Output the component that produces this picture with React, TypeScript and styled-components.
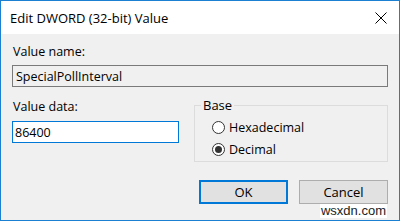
import React from "react";
import styled, { createGlobalStyle } from "styled-components";

const Global = createGlobalStyle`
  html, body { margin: 0; padding: 0; background: #ffffff; }
  * { box-sizing: border-box; }
`;

const Window = styled.div`
  width: 400px;
  height: 221px;
  border: 1px solid #1c80d2;
  display: flex;
  flex-direction: column;
  font-family: "Open Sans", "Noto Sans", sans-serif;
  font-size: 12px;
  color: #000;
  background: #f0f0f0;
  position: relative;
  overflow: hidden;
`;

const TitleBar = styled.div`
  height: 33px;
  background: #ffffff;
  display: flex;
  align-items: center;
  justify-content: space-between;
  padding: 0 12px 0 9px;
  flex-shrink: 0;
`;

const Title = styled.div`
  font-size: 13px;
  color: #000;
`;

const Body = styled.div`
  flex: 1;
  padding: 10px 11px 0 11px;
  display: flex;
  flex-direction: column;
`;

const Label = styled.div<{ $mt?: number }>`
  margin-top: ${(p) => p.$mt ?? 0}px;
  height: 16px;
  line-height: 16px;
  padding-left: 1px;
  font-size: 12.5px;
`;

const ReadOnlyBox = styled.div`
  margin-top: 5px;
  height: 22px;
  border: 1px solid #7a7a7a;
  background: #f0f0f0;
  display: flex;
  align-items: center;
  padding-left: 3px;
  font-size: 12.5px;
`;

const Row = styled.div`
  display: flex;
  gap: 15px;
`;

const LeftCol = styled.div`
  width: 167px;
  display: flex;
  flex-direction: column;
`;

const Input = styled.div`
  margin-top: 6px;
  height: 22px;
  border: 1px solid #0078d7;
  background: #ffffff;
  display: flex;
  align-items: center;
  padding-left: 2px;
  font-size: 12.5px;
`;

const Group = styled.fieldset`
  flex: 1;
  margin: 12px 0 0 0;
  height: 63px;
  border: 1px solid #dcdcdc;
  padding: 8px 0 0 17px;
  display: flex;
  flex-direction: column;
  gap: 6px;
`;

const Legend = styled.legend`
  padding: 0 2px;
  margin-left: -11px;
  font-size: 13px;
  line-height: 12px;
`;

const RadioRow = styled.div`
  display: flex;
  align-items: center;
  gap: 4px;
  height: 16px;
  font-size: 12.5px;
`;

const RadioCircle = styled.span<{ $checked?: boolean }>`
  width: 13px;
  height: 13px;
  border-radius: 50%;
  border: 1px solid #333333;
  background: #ffffff;
  display: flex;
  align-items: center;
  justify-content: center;
  &::after {
    content: "";
    width: 7px;
    height: 7px;
    border-radius: 50%;
    background: ${(p) => (p.$checked ? "#333333" : "transparent")};
  }
`;

const ButtonRow = styled.div`
  margin-top: 18px;
  display: flex;
  justify-content: flex-end;
  gap: 11px;
`;

const Button = styled.div<{ $primary?: boolean }>`
  width: 89px;
  height: 24px;
  background: #e1e1e1;
  border: ${(p) => (p.$primary ? "2px solid #0078d7" : "1px solid #adadad")};
  display: flex;
  align-items: center;
  justify-content: center;
  font-size: 13px;
`;

const Watermark = styled.div`
  position: absolute;
  right: 12px;
  bottom: 2px;
  font-family: "Liberation Sans", Arial, sans-serif;
  font-size: 13px;
  color: #222;
  background: #ffffff;
  padding: 0 1px;
  line-height: 14px;
`;

const CloseIcon = () => (
  <svg width="12" height="12" viewBox="0 0 12 12">
    <path d="M0.5 0.5 L11.5 11.5 M11.5 0.5 L0.5 11.5" stroke="#000" strokeWidth="1" fill="none" />
  </svg>
);

export default function App() {
  return (
    <>
      <Global />
      <Window>
        <TitleBar>
          <Title>Edit DWORD (32-bit) Value</Title>
          <CloseIcon />
        </TitleBar>
        <Body>
          <Label>Value name:</Label>
          <ReadOnlyBox>SpecialPollInterval</ReadOnlyBox>
          <Row>
            <LeftCol>
              <Label $mt={12}>Value data:</Label>
              <Input>86400</Input>
            </LeftCol>
            <Group>
              <Legend>Base</Legend>
              <RadioRow>
                <RadioCircle />
                Hexadecimal
              </RadioRow>
              <RadioRow>
                <RadioCircle $checked />
                Decimal
              </RadioRow>
            </Group>
          </Row>
          <ButtonRow>
            <Button $primary>OK</Button>
            <Button>Cancel</Button>
          </ButtonRow>
        </Body>
        <Watermark>wsxdn.com</Watermark>
      </Window>
    </>
  );
}
